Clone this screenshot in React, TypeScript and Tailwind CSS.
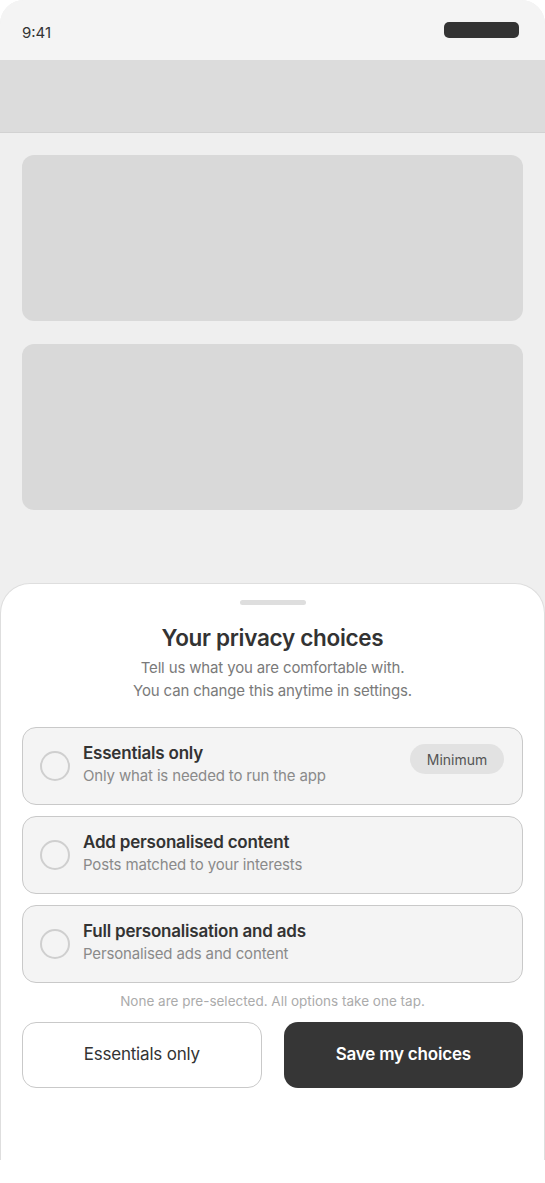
import React from "react";

const font = { fontFamily: "Inter, 'Noto Sans', sans-serif" };

function Option({ title, sub, badge }: { title: string; sub: string; badge?: string }) {
  return (
    <div className="flex h-[78px] items-center rounded-[14px] border-[1.5px] border-[#c9c9c9] bg-[#f4f4f4] pl-[17px] pr-[18px]">
      <div className="h-[30px] w-[30px] shrink-0 rounded-full border-2 border-[#cfcfcf]" />
      <div className="ml-[13px] flex min-w-0 flex-1 flex-col pb-[4px]">
        <div className="text-[17px] font-semibold leading-[23px] tracking-[-0.2px] text-[#333]">{title}</div>
        <div className="text-[15px] leading-[22px] tracking-[-0.15px] text-[#8a8a8a]">{sub}</div>
      </div>
      {badge && (
        <div className="mt-[16px] flex h-[30px] w-[94px] items-center justify-center self-start rounded-full bg-[#e2e2e2] text-[14px] text-[#555]">
          {badge}
        </div>
      )}
    </div>
  );
}

export default function App() {
  return (
    <div className="bg-white" style={font}>
      <div className="relative h-[1160px] w-[545px] overflow-hidden rounded-t-[24px] bg-[#efefef]">
        <div className="flex h-[60px] items-center justify-between bg-[#f4f4f4] pl-[22px] pr-[26px]">
          <span className="mt-[6px] text-[15px] text-[#333]">9:41</span>
          <div className="h-[16px] w-[75px] rounded-[5px] bg-[#333]" />
        </div>
        <div className="h-[73px] border-b border-[#d2d2d2] bg-[#dcdcdc]" />
        <div className="flex flex-col gap-[23px] px-[22px] pt-[22px]">
          <div className="h-[166px] rounded-[12px] bg-[#d9d9d9]" />
          <div className="h-[166px] rounded-[12px] bg-[#d9d9d9]" />
        </div>

        <div className="absolute bottom-0 left-0 right-0 h-[577px] rounded-t-[30px] border border-b-0 border-[#dedede] bg-white px-[21px] pt-[16px]">
          <div className="mx-auto h-[5px] w-[66px] rounded-full bg-[#dedede]" />
          <h2 className="mt-[18px] text-center text-[22.5px] font-semibold leading-[30px] tracking-[-0.3px] text-[#333]">
            Your privacy choices
          </h2>
          <p className="mt-[3px] text-center text-[15px] leading-[23px] tracking-[-0.15px] text-[#7a7a7a]">
            Tell us what you are comfortable with.
            <br />
            You can change this anytime in settings.
          </p>
          <div className="mt-[25px] flex flex-col gap-[11px]">
            <Option title="Essentials only" sub="Only what is needed to run the app" badge="Minimum" />
            <Option title="Add personalised content" sub="Posts matched to your interests" />
            <Option title="Full personalisation and ads" sub="Personalised ads and content" />
          </div>
          <p className="mt-[9px] text-center text-[13.5px] leading-[18px] text-[#ababab]">
            None are pre-selected. All options take one tap.
          </p>
          <div className="mt-[12px] grid grid-cols-2 gap-[22px]">
            <button className="h-[66px] rounded-[14px] border-[1.5px] border-[#c9c9c9] bg-white text-[17px] tracking-[-0.2px] text-[#333]">
              Essentials only
            </button>
            <button className="h-[66px] rounded-[14px] bg-[#363636] text-[17px] font-semibold tracking-[-0.2px] text-white">
              Save my choices
            </button>
          </div>
        </div>
      </div>
    </div>
  );
}
